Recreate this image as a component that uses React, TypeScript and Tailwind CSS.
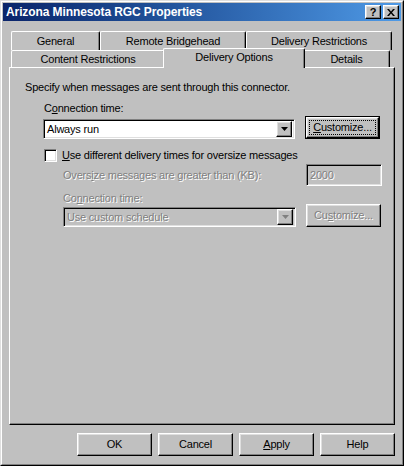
import React from "react";

const raised =
  "border border-t-white border-l-white border-r-black border-b-black shadow-[inset_-1px_-1px_#808080,inset_1px_1px_#dfdfdf]";
const sunken =
  "border border-t-[#808080] border-l-[#808080] border-r-white border-b-white shadow-[inset_1px_1px_#000,inset_-1px_-1px_#dfdfdf]";
const disabledText = "text-[#808080] [text-shadow:1px_1px_0_#fff]";

function Tab({ label, w, selected }: { label: string; w: string; selected?: boolean }) {
  return (
    <div
      className={`${w} flex items-center justify-center rounded-t-[2px] border-t border-l border-t-white border-l-white border-r border-r-black shadow-[inset_-1px_0_#808080] bg-[#c0c0c0] ${
        selected ? "h-[20px] -mb-px -mx-[2px] relative z-10 pb-[3px]" : "h-full pt-px"
      }`}
    >
      {label}
    </div>
  );
}

function Btn({ children, w = "w-[75px]", h = "h-[23px]" }: { children: React.ReactNode; w?: string; h?: string }) {
  return <div className={`${w} ${h} ${raised} flex items-center justify-center bg-[#c0c0c0]`}>{children}</div>;
}

function Arrow({ disabled }: { disabled?: boolean }) {
  return (
    <div className={`w-[16px] h-[16px] ${raised} flex items-center justify-center bg-[#c0c0c0]`}>
      <svg width="7" height="4" viewBox="0 0 7 4">
        <path d="M0 0h7L3.5 4z" fill={disabled ? "#808080" : "#000"} />
      </svg>
    </div>
  );
}

export default function App() {
  return (
    <div
      className="w-[404px] h-[466px] bg-[#c0c0c0] text-[11px] leading-[13px] tracking-[-0.2px] text-black border border-t-[#dfdfdf] border-l-[#dfdfdf] border-r-black border-b-black"
      style={{ fontFamily: '"Liberation Sans", Arial, sans-serif' }}
    >
      <div className="h-full border border-t-white border-l-white border-r-[#808080] border-b-[#808080] p-px flex flex-col">
        {/* title bar */}
        <div className="h-[18px] shrink-0 flex items-center pl-[3px] pr-[2px] bg-gradient-to-r from-[#0a246a] to-[#4f9ae6]">
          <span className="font-bold text-white text-[12px] tracking-[-0.1px]">Arizona Minnesota RGC Properties</span>
          <div className="ml-auto flex gap-[2px]">
            <div className={`w-[16px] h-[14px] ${raised} bg-[#c0c0c0] flex items-center justify-center font-bold text-[11px] leading-none`}>
              ?
            </div>
            <div className={`w-[16px] h-[14px] ${raised} bg-[#c0c0c0] flex items-center justify-center`}>
              <svg width="8" height="7" viewBox="0 0 8 7">
                <path d="M0 0h2l2 2.5L6 0h2L5 3.5 8 7H6L4 4.5 2 7H0l3-3.5z" fill="#000" />
              </svg>
            </div>
          </div>
        </div>

        <div className="px-[6px] flex flex-col">
          {/* tabs */}
          <div className="mt-[10px] pl-[2px] flex h-[19px]">
            <Tab label="General" w="w-[89px]" />
            <Tab label="Remote Bridgehead" w="w-[146px]" />
            <Tab label="Delivery Restrictions" w="w-[146px]" />
          </div>
          <div className="pl-[2px] flex items-end h-[17px]">
            <Tab label="Content Restrictions" w="w-[154px]" />
            <Tab label="Delivery Options" w="w-[142px]" selected />
            <Tab label="Details" w="w-[87px]" />
          </div>

          {/* panel */}
          <div className="h-[358px] border border-t-white border-l-white border-r-black border-b-black shadow-[inset_-1px_-1px_#808080] pl-[15px] flex flex-col">
            <div className="mt-[13px] h-[13px]">Specify when messages are sent through this connector.</div>
            <div className="mt-[8px] ml-[19px] h-[13px]">
              C<u>o</u>nnection time:
            </div>
            <div className="mt-px ml-[18px] flex items-end">
              <div className={`w-[252px] h-[20px] ${sunken} bg-white flex items-center pl-[3px] pr-[2px]`}>
                <span className="flex-1">Always run</span>
                <Arrow />
              </div>
              <div className="ml-[10px] w-[75px] h-[23px] border border-black">
                <div className={`h-full ${raised} flex p-[2px] bg-[#c0c0c0]`}>
                  <div className="flex-1 border border-dotted border-black flex items-center justify-center">
                    <span>
                      <u>C</u>ustomize...
                    </span>
                  </div>
                </div>
              </div>
            </div>
            <div className="mt-[10px] ml-[19px] flex items-center h-[13px]">
              <div className={`w-[13px] h-[13px] ${sunken} bg-white`} />
              <span className="ml-[5px]">
                <u>U</u>se different delivery times for oversize messages
              </span>
            </div>
            <div className="mt-[2px] ml-[38px] flex items-center h-[22px]">
              <span className={`flex-1 ${disabledText}`}>
                Overs<u>i</u>ze messages are greater than (KB):
              </span>
              <div className={`w-[76px] h-[22px] mr-[12px] ${sunken} flex items-center pl-[3px] ${disabledText}`}>
                2000
              </div>
            </div>
            <div className={`mt-[6px] ml-[38px] h-[12px] ${disabledText}`}>
              Co<u>n</u>nection time:
            </div>
            <div className="ml-[38px] flex items-end">
              <div className={`w-[233px] h-[20px] ${sunken} bg-[#c0c0c0] flex items-center pl-[3px] pr-[2px]`}>
                <span className={`flex-1 ${disabledText}`}>Use custom schedule</span>
                <Arrow disabled />
              </div>
              <div className="ml-[10px]">
                <Btn>
                  <span className={disabledText}>
                    Cu<u>s</u>tomize...
                  </span>
                </Btn>
              </div>
            </div>
          </div>

          {/* bottom buttons */}
          <div className="mt-[8px] flex justify-end gap-[6px]">
            <Btn>OK</Btn>
            <Btn>Cancel</Btn>
            <Btn>
              <span>
                <u>A</u>pply
              </span>
            </Btn>
            <Btn>Help</Btn>
          </div>
        </div>
      </div>
    </div>
  );
}
